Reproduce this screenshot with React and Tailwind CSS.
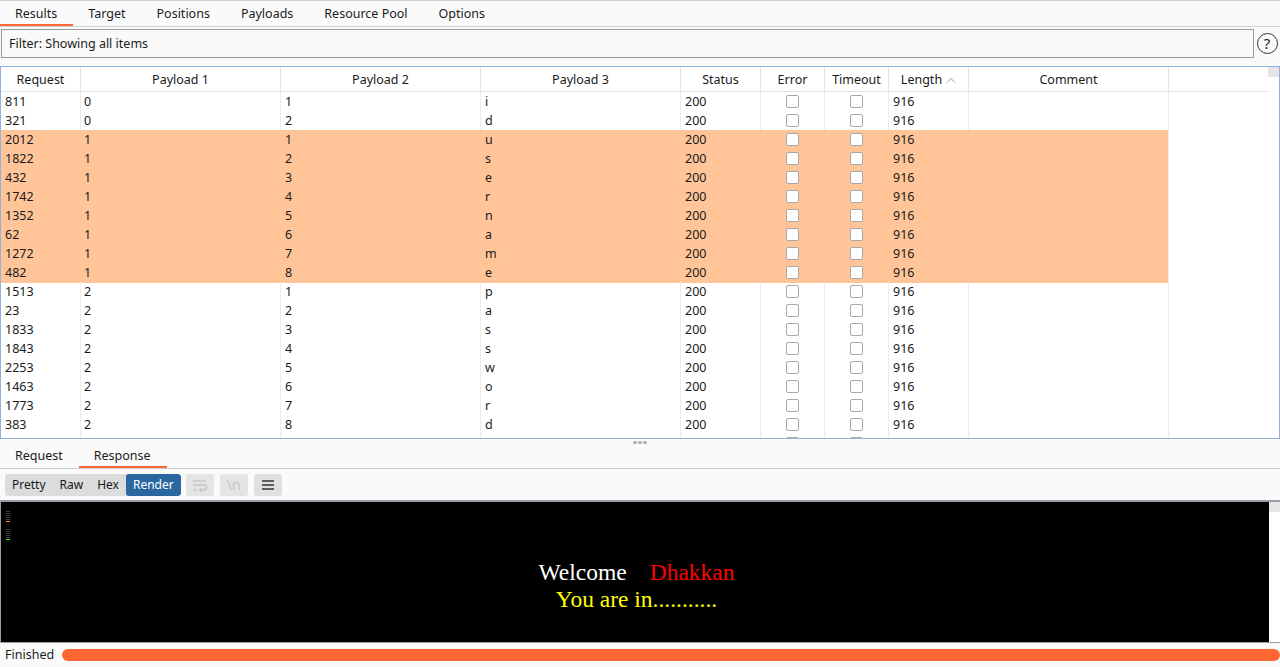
import React from "react";

const rows = [
  ["811", "0", "1", "i", false],
  ["321", "0", "2", "d", false],
  ["2012", "1", "1", "u", true],
  ["1822", "1", "2", "s", true],
  ["432", "1", "3", "e", true],
  ["1742", "1", "4", "r", true],
  ["1352", "1", "5", "n", true],
  ["62", "1", "6", "a", true],
  ["1272", "1", "7", "m", true],
  ["482", "1", "8", "e", true],
  ["1513", "2", "1", "p", false],
  ["23", "2", "2", "a", false],
  ["1833", "2", "3", "s", false],
  ["1843", "2", "4", "s", false],
  ["2253", "2", "5", "w", false],
  ["1463", "2", "6", "o", false],
  ["1773", "2", "7", "r", false],
  ["383", "2", "8", "d", false],
  [null, "", "", "", false],
];

const cols = "grid grid-cols-[80px_200px_200px_200px_80px_64px_64px_80px_200px_100px]";

function Box() {
  return <div className="w-[13px] h-[13px] bg-white border border-[#a8a8a8] rounded-[2px]" />;
}

export default function App() {
  return (
    <div
      className="w-[1280px] h-[667px] bg-[#fafafa] flex flex-col text-[12.5px] text-[#1a1a1a] overflow-hidden"
      style={{ fontFamily: '"Noto Sans", "Liberation Sans", sans-serif' }}
    >
      {/* top tabs */}
      <div className="h-[27px] shrink-0 border-t border-[#d4d4d4] border-b border-b-[#cfd2d2] flex items-stretch">
        {["Results", "Target", "Positions", "Payloads", "Resource Pool", "Options"].map((t, i) => (
          <div key={t} className="flex items-center relative pt-[1px]" style={{ paddingLeft: 15, paddingRight: 16 }}>
            <span className="leading-none">{t}</span>
            {i === 0 && <div className="absolute left-0 right-0 bottom-0 h-[2px] bg-[#ff6633]" />}
          </div>
        ))}
      </div>

      {/* filter */}
      <div className="flex items-center mt-[2px] h-[29px] shrink-0">
        <div className="flex-1 ml-[1px] h-[29px] border border-[#9a9a9a] bg-[#fafafa] flex items-center pl-[7px] pt-[1px]">
          Filter: Showing all items
        </div>
        <div className="w-[26px] flex items-center justify-center">
          <div className="w-[21px] h-[21px] rounded-full border border-[#333] flex items-center justify-center text-[15px] leading-none text-[#222]">
            ?
          </div>
        </div>
      </div>

      {/* results table */}
      <div className="mt-[8px] h-[373px] shrink-0 border border-[#8fb3dd] bg-white flex overflow-hidden">
        <div className="flex-1 flex flex-col overflow-hidden">
          <div className={`${cols} h-[25px] shrink-0 border-b border-[#e4e4e4]`}>
            {["Request", "Payload 1", "Payload 2", "Payload 3", "Status", "Error", "Timeout", "Length", "Comment", ""].map((h, i) => (
              <div key={i} className="flex items-center justify-center border-r border-[#e4e4e4] pt-[2px]">
                {h}
                {h === "Length" && (
                  <svg width="10" height="6" viewBox="0 0 10 6" className="ml-[4px]">
                    <path d="M1 5.5 L5 1.5 L9 5.5" fill="none" stroke="#9a9a9a" strokeWidth="1" />
                  </svg>
                )}
              </div>
            ))}
          </div>
          {rows.map((r, idx) => {
            const bg = r[4] ? "bg-[#ffc599] border-[#ffc599]" : "border-[#ececec]";
            const t = r[0] !== null;
            return (
              <div key={idx} className={`${cols} h-[19px] shrink-0`}>
                <div className={`pl-[4px] pt-[1px] flex items-center border-r ${bg}`}>{r[0]}</div>
                <div className={`pl-[3px] pt-[1px] flex items-center border-r ${bg}`}>{r[1]}</div>
                <div className={`pl-[4px] pt-[1px] flex items-center border-r ${bg}`}>{r[2]}</div>
                <div className={`pl-[4px] pt-[1px] flex items-center border-r ${bg}`}>{r[3]}</div>
                <div className={`pl-[4px] pt-[1px] flex items-center border-r ${bg}`}>{t ? "200" : ""}</div>
                <div className={`flex items-center justify-center border-r ${bg}`}><Box /></div>
                <div className={`flex items-center justify-center border-r ${bg}`}><Box /></div>
                <div className={`pl-[4px] pt-[1px] flex items-center border-r ${bg}`}>{t ? "916" : ""}</div>
                <div className={`${r[4] ? "bg-[#ffc599]" : ""} border-r border-[#ececec]`}></div>
                <div></div>
              </div>
            );
          })}
        </div>
        <div className="w-[11px] flex flex-col bg-white">
          <div className="h-[10px] bg-[#e6e6e6]" />
        </div>
      </div>

      {/* splitter */}
      <div className="h-[5px] shrink-0 flex items-center justify-center gap-[1px] pt-[1px]">
        <div className="w-[4px] h-[3px] rounded-full bg-[#b0b0b0]" />
        <div className="w-[4px] h-[3px] rounded-full bg-[#b0b0b0]" />
        <div className="w-[4px] h-[3px] rounded-full bg-[#b0b0b0]" />
      </div>

      {/* lower tabs */}
      <div className="h-[25px] shrink-0 border-b border-[#c9cccc] flex items-stretch">
        {["Request", "Response"].map((t, i) => (
          <div key={t} className="relative flex items-center" style={{ paddingLeft: 15, paddingRight: 16 }}>
            <span className="leading-none">{t}</span>
            {i === 1 && <div className="absolute left-0 right-0 bottom-0 h-[2px] bg-[#ff6633]" />}
          </div>
        ))}
      </div>

      {/* toolbar */}
      <div className="h-[31px] shrink-0 flex items-center pl-[5px] gap-[5px] text-[12px]">
        <div className="flex items-stretch h-[22px] bg-[#dcdcdc] rounded-[3px] overflow-hidden">
          <div className="px-[7px] flex items-center">Pretty</div>
          <div className="px-[7px] flex items-center">Raw</div>
          <div className="px-[7px] flex items-center">Hex</div>
          <div className="px-[7px] flex items-center bg-[#2a67a0] text-white rounded-[3px]">Render</div>
        </div>
        <div className="w-[28px] h-[22px] bg-[#e4e4e4] rounded-[3px] flex items-center justify-center">
          <svg width="16" height="14" viewBox="0 0 16 14" fill="none" stroke="#c4c4c4" strokeWidth="1.3">
            <path d="M1 3 H14" />
            <path d="M1 7 H12 A2.5 2.5 0 0 1 12 12 H8" />
            <path d="M9.5 10.3 L7.8 12 L9.5 13.7" />
            <path d="M1 12 H5" />
          </svg>
        </div>
        <div className="ml-[1px] w-[28px] h-[22px] bg-[#e4e4e4] rounded-[3px] flex items-center justify-center text-[#c4c4c4] text-[14px] leading-none">
          \n
        </div>
        <div className="ml-[1px] w-[28px] h-[22px] bg-[#e0e0e0] rounded-[3px] flex items-center justify-center">
          <svg width="14" height="12" viewBox="0 0 14 12" stroke="#333" strokeWidth="1.6">
            <path d="M1 2 H13 M1 6 H13 M1 10 H13" />
          </svg>
        </div>
      </div>

      {/* render area */}
      <div className="h-[142px] shrink-0 border-t-2 border-l border-[#9c9ca8] bg-black flex relative">
        <div className="absolute left-[5px] top-[9px] flex flex-col gap-[1px]">
          {["#3a3a3a", "#3a3a3a", "#3a3a3a", "#3a3a3a", "#3a3a3a", "#ff8a00"].map((c, i) => (
            <div key={i} className="w-[4px] h-[1px]" style={{ background: c }} />
          ))}
          <div className="h-[5px]" />
          {["#3a3a3a", "#3a3a3a", "#3a3a3a", "#3a3a3a", "#3a3a3a", "#44dd00"].map((c, i) => (
            <div key={"g" + i} className="w-[4px] h-[1px]" style={{ background: c }} />
          ))}
        </div>
        <div
          className="flex-1 flex flex-col items-center pt-[57px] pl-[3px] text-[23.5px] leading-[27px]"
          style={{ fontFamily: '"Liberation Serif", "Times New Roman", serif' }}
        >
          <div>
            <span className="text-white">Welcome</span>
            <span className="inline-block w-[23px]" />
            <span className="text-[#ff0000]">Dhakkan</span>
          </div>
          <div className="text-[#ffff00]">You are in...........</div>
        </div>
        <div className="w-[11px] bg-white flex flex-col">
          <div className="h-[10px] bg-[#e6e6e6]" />
        </div>
      </div>

      {/* status */}
      <div className="flex-1 flex items-center pl-[5px] gap-[8px] bg-[#fafafa] border-t border-[#9c9ca8]">
        <span>Finished</span>
        <div className="flex-1 h-[12px] rounded-full bg-[#ff6633]" />
      </div>
    </div>
  );
}
